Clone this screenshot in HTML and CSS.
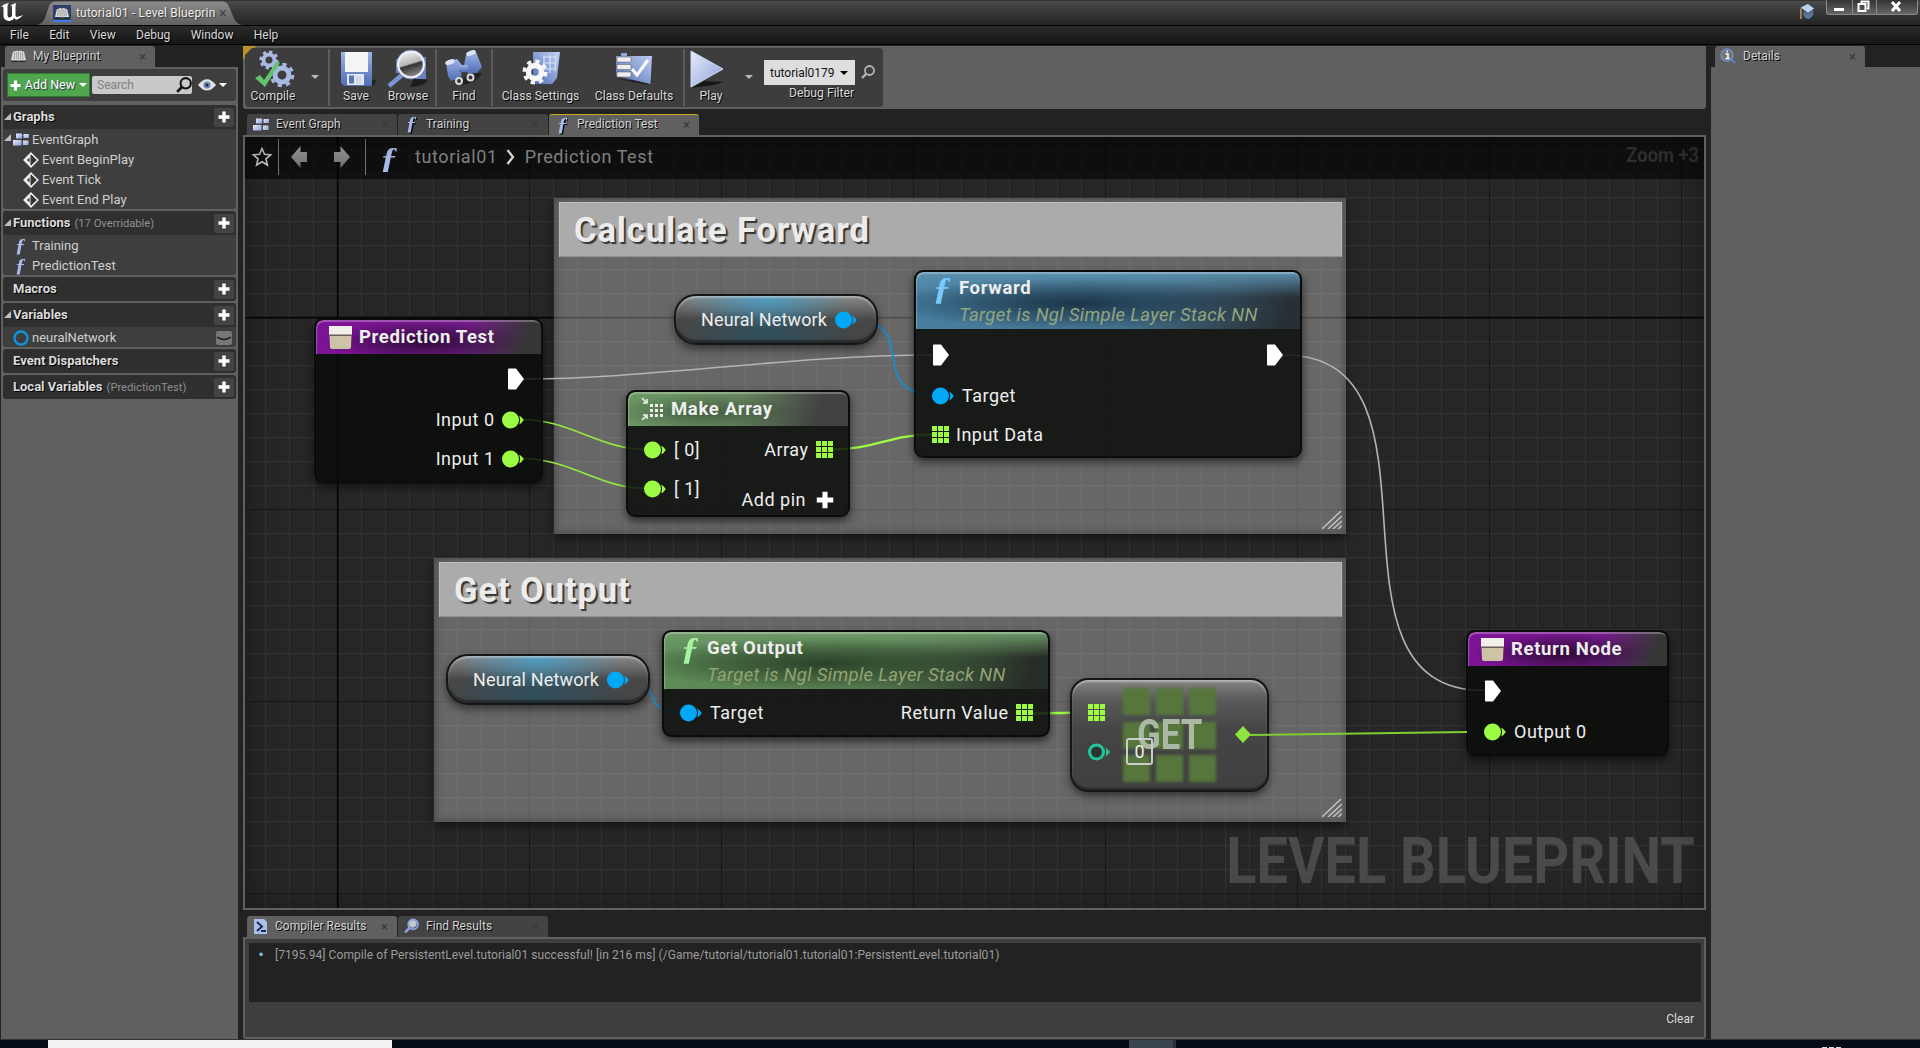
FILE: index.html
```html
<!DOCTYPE html>
<html lang="en">
<head>
<meta charset="utf-8">
<title>tutorial01 - Level Blueprint</title>
<link rel="stylesheet" href="styles.css">
</head>
<body>
<svg class="defs" width="0" height="0">
  <defs>
    <linearGradient id="steel" x1="0" y1="0" x2="1" y2="1"><stop offset="0" stop-color="#e6ecfa"/><stop offset="1" stop-color="#8ea2da"/></linearGradient>
    <linearGradient id="blue" x1="0" y1="0" x2="0" y2="1"><stop offset="0" stop-color="#9fb4e6"/><stop offset="1" stop-color="#4f6cb4"/></linearGradient>
    <linearGradient id="sheet" x1="1" y1="0" x2="0" y2="1"><stop offset="0" stop-color="#c3d3f5"/><stop offset="1" stop-color="#4f6cb4"/></linearGradient>
    <linearGradient id="ball" x1=".2" y1="0" x2=".5" y2="1"><stop offset="0" stop-color="#f6f6f6"/><stop offset=".5" stop-color="#b5b5b5"/><stop offset=".56" stop-color="#343434"/><stop offset="1" stop-color="#8c8c8c"/></linearGradient>
    <linearGradient id="arrow" x1="0" y1="0" x2="0" y2="1"><stop offset="0" stop-color="#9c9c9c"/><stop offset="1" stop-color="#6e6e6e"/></linearGradient>
    <symbol id="plus" viewBox="0 0 12 12"><path d="M4.3 0.5h3.4v3.8h3.8v3.4H7.7v3.8H4.3V7.7H.5V4.3h3.8z" fill="#fff"/></symbol>
    <symbol id="graph" viewBox="0 0 16 13"><path d="M8 2.500h3M8 10h3" stroke="#4d5d8e" stroke-width="1.200"/><rect x="3" y=".5" width="6" height="5" fill="url(#steel)"/><rect x="10.500" y="1" width="5.500" height="4" fill="url(#steel)"/><rect x="0" y="7" width="8.500" height="5.500" fill="url(#steel)"/><rect x="10" y="7.500" width="5.500" height="4.500" fill="url(#steel)"/></symbol>
    <symbol id="event" viewBox="0 0 16 16"><path d="M8 1.200 14.800 8 8 14.800 1.200 8z" fill="#333" stroke="#eee" stroke-width="1.600"/><path d="M7.500 2 1.500 8l6 6z" fill="#eee"/><path d="M6.500 5.500 4 8l2.500 2.500z" fill="#333"/></symbol>
    <symbol id="book" viewBox="0 0 16 14"><path d="M2 2 7 .5 8 2 9 .5 14 2l2 9-7 0-1 1-1-1-7 0z" fill="#d9d9d9"/><path d="M8 2v9M4 2.500 3 10M6 2.500 5.500 10M10 2.500l.5 7.500M12 2.500l1 7.500" stroke="#8a8a8a" stroke-width=".8"/><path d="M0 12.500h16" stroke="#222"/></symbol>
    <symbol id="exec" viewBox="0 0 18 22"><path d="M1 1.500Q1 .5 2 .5H9L17 11 9 21.500H2Q1 21.500 1 20.500z" fill="#fff"/></symbol>
    <symbol id="pin" viewBox="0 0 22 18"><circle cx="8.500" cy="9" r="8.500"/><path d="M17.300 4.500Q20 6 21.800 9 20 12 17.300 13.500 19 9 17.300 4.500z"/></symbol>
    <symbol id="grid" viewBox="0 0 17 17"><path d="M0 0h5v5H0zM6 0h5v5H6zM12 0h5v5h-5zM0 6h5v5H0zM6 6h5v5H6zM12 6h5v5h-5zM0 12h5v5H0zM6 12h5v5H6zM12 12h5v5h-5z" fill="#9cfc44"/></symbol>
    <symbol id="entry" viewBox="0 0 23 23"><path d="M0 0h23v9H0z" fill="#f0efe9"/><path d="M0 8.500h23v1.500H0z" fill="#6b5f55"/><path d="M.5 10h22L22 21q0 2-2 2H3q-2 0-2-2z" fill="#cdc4a5"/></symbol>
    <symbol id="grip" viewBox="0 0 20 18"><path d="M0 18 19 0M6 18 20 5M11 18 20 10M16 18 20 14.500" stroke="#c4c4c4" stroke-width="1.500" fill="none"/></symbol>
    <symbol id="lens" viewBox="0 0 14 14"><circle cx="8.500" cy="5.500" r="4.500" fill="none" stroke-width="1.800"/><path d="M5.200 8.800 1 13" stroke-width="2.400"/></symbol>
  </defs>
</svg>

<header class="titlebar">
  <svg class="ue-logo" viewBox="0 0 22 20"><path d="M0 5Q3 1.500 8 1 6.500 2 6.500 4V13q0 2 1.500 2.500 1.500 0 3-1.500V5q0-1.500-1.500-1.500Q12 1.500 15.500 1 14.500 2 14.500 4v9q0 2 1.500 2 2-.5 6-2-3 4-7 5l-1.500-2Q11 19.500 7.500 19 2.500 18 2.500 14V6Q2.500 4 0 5z" fill="#fff"/></svg>
  <div class="window-tab">
    <svg class="window-tab-shape" viewBox="0 0 210 24" preserveAspectRatio="none"><defs><linearGradient id="wt" x1="0" y1="0" x2="0" y2="1"><stop offset="0" stop-color="#8c8c8c"/><stop offset="1" stop-color="#606060"/></linearGradient></defs><path d="M0 24Q6 24 9 17L13 5Q15 .5 20 .5H186q5 0 7 5l5 12q3 6.500 9 6.500z" fill="url(#wt)"/></svg>
    <span class="asset-icon"><svg width="14" height="13"><use href="#book"/></svg></span>
    <span class="window-title">tutorial01 - Level Blueprin</span><span class="close">×</span>
  </div>
  <div class="title-tools">
    <svg class="cap" viewBox="0 0 16 18"><path d="M1 4 9 0l7 5-7 5z" fill="#b9d2f2"/><path d="M4 8l5 3 6-4v5q-3 5-6 5-4-1-5-4z" fill="#58759e"/><path d="M1.200 5V17" stroke="#d0a56a" stroke-width="1.500"/></svg>
    <div class="win-buttons">
      <span><svg width="25" height="14"><path d="M7 8h10v3H7z" fill="#fff"/></svg></span>
      <span><svg width="23" height="14"><path d="M8.500 3V1.500h7v7H14M5.500 4h7v7h-7z" stroke="#fff" stroke-width="2" fill="none"/></svg></span>
      <span><svg width="40" height="14"><path d="M15 2l8 9M23 2l-8 9" stroke="#fff" stroke-width="3"/></svg></span>
    </div>
  </div>
</header>
<nav class="menubar"><span>File</span><span>Edit</span><span>View</span><span>Debug</span><span>Window</span><span>Help</span></nav>

<main class="workspace">
  <aside class="blueprint-panel">
    <div class="tabs"><div class="tab active"><svg width="15" height="13"><use href="#book"/></svg><span>My Blueprint</span><i>×</i></div></div>
    <div class="panel">
      <div class="add-bar">
        <button class="add-new"><svg width="11" height="11"><use href="#plus"/></svg>Add New<b class="caret white"></b></button>
        <div class="search"><span>Search</span><svg width="16" height="16" stroke="#111"><use href="#lens"/></svg></div>
        <svg class="eye" viewBox="0 0 18 12"><path d="M0 6Q9-5.500 18 6 9 17 0 6z" fill="#e2e2e2"/><circle cx="9" cy="6" r="3.600" fill="#6b8ab8"/><circle cx="9" cy="6" r="1.500" fill="#223"/></svg><b class="caret white"></b>
      </div>
      <section><h2 class="open">Graphs<button><svg width="12" height="12"><use href="#plus"/></svg></button></h2>
        <p class="open"><svg width="16" height="13"><use href="#graph"/></svg>EventGraph</p>
        <p class="deep"><svg width="16" height="16"><use href="#event"/></svg>Event BeginPlay</p>
        <p class="deep"><svg width="16" height="16"><use href="#event"/></svg>Event Tick</p>
        <p class="deep"><svg width="16" height="16"><use href="#event"/></svg>Event End Play</p>
      </section>
      <section><h2 class="open">Functions<small>(17 Overridable)</small><button><svg width="12" height="12"><use href="#plus"/></svg></button></h2>
        <p><em class="fn">ƒ</em>Training</p>
        <p><em class="fn">ƒ</em>PredictionTest</p>
      </section>
      <section><h2>Macros<button><svg width="12" height="12"><use href="#plus"/></svg></button></h2></section>
      <section><h2 class="open">Variables<button><svg width="12" height="12"><use href="#plus"/></svg></button></h2>
        <p><svg width="16" height="16"><circle cx="8" cy="8" r="6.500" fill="none" stroke="#0d94dd" stroke-width="2.400"/></svg>neuralNetwork<span class="lid"><svg width="16" height="14"><path d="M1 6q7 5 14 0" stroke="#111" stroke-width="1.300" fill="none"/></svg></span></p>
      </section>
      <section><h2>Event Dispatchers<button><svg width="12" height="12"><use href="#plus"/></svg></button></h2></section>
      <section><h2>Local Variables<small>(PredictionTest)</small><button><svg width="12" height="12"><use href="#plus"/></svg></button></h2></section>
    </div>
  </aside>

  <div class="center">
    <div class="toolbar-band"><div class="toolbar">
      <div class="tool compile"><svg viewBox="0 0 44 38"><g fill="none" stroke="#a9b9e4"><circle cx="17" cy="11" r="5.500" stroke-width="4"/><circle cx="17" cy="11" r="8.300" stroke-width="2.600" stroke-dasharray="3.300 3.200"/><circle cx="30" cy="26" r="7" stroke-width="5"/><circle cx="30" cy="26" r="10.800" stroke-width="3" stroke-dasharray="4.300 4.180"/></g><path d="M3 29l5-3 4 5L25 12l3 2L13 38z" fill="#5fc46c"/></svg><span>Compile</span></div>
      <b class="caret"></b><hr>
      <div class="tool save"><svg viewBox="0 0 44 38"><path d="M14 37h26l3-7z" fill="#222"/><path d="M7 3h31v34H10l-3-3z" fill="url(#blue)"/><path d="M11 3h23v20H11z" fill="#f4f4f4"/><path d="M13 25h17v11H13z" fill="#e3e8f4"/><path d="M15 26.500h5v8h-5z" fill="#5a75b8"/><path d="M23 27v8M26 27v8" stroke="#b5bfd9"/></svg><span>Save</span></div>
      <div class="tool browse"><svg viewBox="0 0 44 38"><path d="M24 38q14 0 18-7l-14-2z" fill="#1d1d1d"/><path d="M30 8h10v22H30zM10 10h8v14h-8z" fill="#6883c4"/><path d="M3 37 16 26" stroke="#7c95d4" stroke-width="4.500"/><circle cx="25" cy="15.500" r="13" fill="url(#ball)" stroke="#eceef6" stroke-width="2.600"/><circle cx="25" cy="15.500" r="14.600" fill="none" stroke="#6c82bd" stroke-width=".8"/></svg><span>Browse</span></div>
      <hr>
      <div class="tool find"><svg viewBox="0 0 44 38"><path d="M16 36q18 0 24-12l-14 0z" fill="#222"/><g fill="url(#blue)"><path d="M4 13 15 10l5 6-1 12-10 4-3-5z"/><path d="M24 6 34 3l6 15-5 6-9 1-4-9z"/><path d="M17 16h9v7h-9z"/></g><ellipse cx="8" cy="13" rx="5" ry="2.500" fill="#dce4f7" transform="rotate(-20 8 13)"/><ellipse cx="29" cy="4" rx="5" ry="2.500" fill="#dce4f7" transform="rotate(-20 29 4)"/><circle cx="17" cy="32" r="4" fill="#d8d8d8"/><circle cx="17" cy="32" r="1.900" fill="#333"/><circle cx="28.500" cy="28.500" r="4" fill="#d8d8d8"/><circle cx="28.500" cy="28.500" r="1.900" fill="#333"/></svg><span>Find</span></div>
      <hr>
      <div class="tool settings"><svg viewBox="0 0 44 38"><path d="M14 3h27l-3 26-5 6H14z" fill="url(#sheet)"/><path d="M24 8h13M24 14h13M26 20h10M25 6v16M31 6v18M37 6l-1 16" stroke="#dbe5fb" stroke-width="1.100"/><g fill="none" stroke="#f7f7f7"><circle cx="16" cy="23" r="6.500" stroke-width="5.500"/><circle cx="16" cy="23" r="10.700" stroke-width="3.600" stroke-dasharray="4.300 4.100"/></g></svg><span>Class Settings</span></div>
      <div class="tool defaults"><svg viewBox="0 0 44 38"><path d="M5 30l31 6 4-4z" fill="#222"/><path d="M4 7h5V4h6v3h25l-1.500 28L4 27z" fill="url(#sheet)"/><path d="M5 8h14v5H5zM5 15.500h14v5H5zM5 23h14v5H5z" fill="#eee" stroke="#555" stroke-width=".5"/><path d="M20 20l5 6L36 11" stroke="#fbfbfb" stroke-width="3" fill="none"/></svg><span>Class Defaults</span></div>
      <hr class="last">
      <div class="tool play"><svg viewBox="0 0 44 38"><path d="M3 39l12-7 20 1-10 3z" fill="#161616"/><path d="M2 2v36l32-18z" fill="url(#steel)" stroke="#cdd9f5"/></svg><span>Play</span></div>
      <b class="caret second"></b>
      <div class="debug"><div class="debug-row"><div class="select">tutorial0179<b class="caret dark"></b></div><svg width="14" height="14" stroke="#b5b5b5"><use href="#lens"/></svg></div><span>Debug Filter</span></div>
    </div></div>

    <div class="tabs graph-tabs">
      <div class="tab"><svg width="16" height="13"><use href="#graph"/></svg><span>Event Graph</span><i>×</i></div>
      <div class="tab"><em class="fn">ƒ</em><span>Training</span><i>×</i></div>
      <div class="tab active current"><em class="fn">ƒ</em><span>Prediction Test</span><i>×</i></div>
    </div>

    <div class="graph">
      <div class="breadcrumb">
        <svg class="star" viewBox="0 0 20 20"><path d="M10 1.500l2.500 5.700 6.200.6-4.700 4.100 1.400 6.100-5.400-3.200L4.600 18 6 11.900 1.300 7.800l6.200-.6z" fill="none" stroke="#c6c6c6" stroke-width="1.600"/></svg>
        <u></u>
        <svg class="nav" viewBox="0 0 17 22"><path d="M0 11 9.500 0v6H16v10H9.500v6z" fill="url(#arrow)"/></svg>
        <svg class="nav next" viewBox="0 0 17 22"><path d="M17 11 7.500 0v6H1v10h6.500v6z" fill="url(#arrow)"/></svg>
        <u class="second"></u><em class="fn big">ƒ</em>
        <span class="crumb-a">tutorial01</span>
        <svg class="chev" viewBox="0 0 9 16"><path d="M1.500 1 7 8l-5.500 7" stroke="#e0e0e0" stroke-width="2.200" fill="none"/></svg>
        <span class="crumb-b">Prediction Test</span>
      </div>
      <div class="zoom">Zoom +3</div>
      <div class="watermark">LEVEL BLUEPRINT</div>

      <div class="comment calc"><h3>Calculate Forward</h3><svg class="grip" width="20" height="18"><use href="#grip"/></svg></div>
      <div class="comment output"><h3>Get Output</h3><svg class="grip" width="20" height="18"><use href="#grip"/></svg></div>

      <svg class="wires" viewBox="245 137 1459 771" fill="none">
        <g stroke="#b4b4b4" stroke-width="1.600"><path d="M524 379C650 379 790 355 932 355"/><path d="M1284 355C1462 355 1306 690.500 1484 690.500"/></g>
        <g stroke="#94ea42" stroke-width="1.700"><path d="M522 419.500C570 419.500 600 449.500 646 449.500"/><path d="M522 458.500C570 458.500 600 488.500 646 488.500"/></g>
        <g stroke="#9cfc44" stroke-width="2.400"><path d="M832 449.500C875 449.500 890 434.500 932 434.500"/><path d="M1032 713.500 1090 712.500"/></g>
        <g stroke="#1290d4" stroke-width="1.700"><path d="M850 319C923 319 863 395 936 395"/><path d="M622 679C667 679 637 713 682 713"/></g>
      </svg>

      <div class="node n-entry"><div class="head purple"><svg width="23" height="23"><use href="#entry"/></svg><b>Prediction Test</b></div>
        <div class="pins right"><div class="pin exec"><svg width="18" height="22"><use href="#exec"/></svg></div><div class="pin"><span>Input 0</span><svg width="22" height="18" fill="#9cfc44"><use href="#pin"/></svg></div><div class="pin"><span>Input 1</span><svg width="22" height="18" fill="#9cfc44"><use href="#pin"/></svg></div></div></div>

      <div class="pill p-one"><span>Neural Network</span><svg width="22" height="18" fill="#00a8f6"><use href="#pin"/></svg></div>
      <div class="pill p-two"><span>Neural Network</span><svg width="22" height="18" fill="#00a8f6"><use href="#pin"/></svg></div>

      <div class="node n-make"><div class="head sage"><svg width="23" height="24" viewBox="0 0 23 24"><path d="M1 1l4 4M6 2v4H2M1 23l4-4M6 22v-4H2" stroke="#eee" stroke-width="1.600" fill="none"/><path d="M9 7h3v3H9zM14 7h3v3h-3zM19 7h3v3h-3zM9 12h3v3H9zM14 12h3v3h-3zM19 12h3v3h-3zM9 17h3v3H9zM14 17h3v3h-3zM19 17h3v3h-3z" fill="#eee"/></svg><b>Make Array</b></div>
        <div class="columns"><div class="pins left"><div class="pin"><svg width="22" height="18" fill="#9cfc44"><use href="#pin"/></svg><span>[ 0]</span></div><div class="pin"><svg width="22" height="18" fill="#9cfc44"><use href="#pin"/></svg><span>[ 1]</span></div></div>
        <div class="pins right"><div class="pin"><span>Array</span><svg width="17" height="17"><use href="#grid"/></svg></div><div class="pin add"><span>Add pin</span><svg width="18" height="18"><use href="#plus"/></svg></div></div></div></div>

      <div class="node n-forward"><div class="head tall blue"><em class="fn">ƒ</em><div><b>Forward</b><i>Target is Ngl Simple Layer Stack NN</i></div></div>
        <div class="columns"><div class="pins left"><div class="pin exec"><svg width="18" height="22"><use href="#exec"/></svg></div><div class="pin"><svg width="22" height="18" fill="#00a8f6"><use href="#pin"/></svg><span>Target</span></div><div class="pin array"><svg width="17" height="17"><use href="#grid"/></svg><span>Input Data</span></div></div>
        <div class="pins right"><div class="pin exec"><svg width="18" height="22"><use href="#exec"/></svg></div></div></div></div>

      <div class="node n-output"><div class="head tall green"><em class="fn">ƒ</em><div><b>Get Output</b><i>Target is Ngl Simple Layer Stack NN</i></div></div>
        <div class="columns"><div class="pins left"><div class="pin"><svg width="22" height="18" fill="#00a8f6"><use href="#pin"/></svg><span>Target</span></div></div><div class="pins right"><div class="pin"><span>Return Value</span><svg width="17" height="17"><use href="#grid"/></svg></div></div></div></div>

      <div class="get-node">
        <div class="get-tiles"><s></s><s></s><s></s><s></s><s></s><s></s><s></s><s></s><s></s></div>
        <div class="get-label">GET</div>
        <div class="get-inputs"><svg width="17" height="17"><use href="#grid"/></svg><div><svg width="23" height="18" viewBox="0 0 23 18"><circle cx="8.500" cy="9" r="7" stroke="#22c49a" stroke-width="3" fill="#2b3431"/><path d="M17.500 4.500Q20 6 22 9q-2 3-4.500 4.500Q19 9 17.500 4.500z" fill="#22c49a"/></svg><span class="index">0</span></div></div>
        <svg class="diamond" width="16" height="17"><path d="M8 0l8 8.500-8 8.500-8-8.500z" fill="#8fe33f"/></svg>
      </div>

      <div class="node n-return"><div class="head purple"><svg width="23" height="23"><use href="#entry"/></svg><b>Return Node</b></div>
        <div class="pins left"><div class="pin exec"><svg width="18" height="22"><use href="#exec"/></svg></div><div class="pin"><svg width="22" height="18" fill="#9cfc44"><use href="#pin"/></svg><span>Output 0</span></div></div></div>

      <svg class="wires" viewBox="245 137 1459 771" fill="none"><path d="M1250 735 1467 732" stroke="#7fd02f" stroke-width="2"/></svg>
      <div class="vignette"></div>
    </div>

    <div class="tabs result-tabs">
      <div class="tab active"><svg width="15" height="15"><path d="M1 0h10l3 3v12H1z" fill="#a9c2ee"/><path d="M4 3l5 4.500L4 12M8 12h5" stroke="#1d2b50" stroke-width="2" fill="none"/></svg><span>Compiler Results</span><i>×</i></div>
      <div class="tab"><svg width="15" height="16" stroke="#8ba2dc"><circle cx="8.500" cy="5.500" r="4" fill="#c8c8c8"/><use href="#lens"/></svg><span>Find Results</span><i>×</i></div>
    </div>
    <div class="results"><div class="log"><b>•</b><span>[7195.94] Compile of PersistentLevel.tutorial01 successful! [in 216 ms] (/Game/tutorial/tutorial01.tutorial01:PersistentLevel.tutorial01)</span></div><div class="clear">Clear</div></div>
  </div>

  <aside class="details-panel">
    <div class="tabs"><div class="tab active"><svg width="16" height="16"><circle cx="7" cy="7" r="6" fill="#777" stroke="#6f8ccc" stroke-width="1.400"/><path d="M11.500 11.500 15 15" stroke="#5b7fd6" stroke-width="2"/><path d="M5.500 6H8v4.500M5.500 10.500h4M6.500 3.500H8" stroke="#fff" stroke-width="1.500" fill="none"/></svg><span>Details</span><i>×</i></div></div>
    <div class="panel"></div>
  </aside>
</main>
<footer class="taskbar"><span class="start"></span><span class="active-app"></span><span class="clock"><s></s><s></s><s></s></span></footer>
</body>
</html>
```
FILE: styles.css
```css
* { box-sizing: border-box; }
body { margin: 0; width: 1920px; height: 1048px; overflow: hidden; display: flex; flex-direction: column; background: #222; color: #d8d8d8; font: 12px/20px Roboto, "Noto Sans", sans-serif; }
svg { display: block; flex: none; overflow: visible; }
em, i, s, u { font-style: normal; text-decoration: none; }
button { font: inherit; color: inherit; padding: 0; border: 0; }
.defs { position: absolute; }

.titlebar { height: 26px; flex: none; display: flex; background: linear-gradient(#4a4a4a 0, #3c3c3c 8px, #2c2c2c 18px, #232323 25px); border-top: 1px solid #333; border-bottom: 1px solid #000; }
.ue-logo { width: 22px; height: 20px; margin: 1px 0 0 1px; }
.window-tab { position: relative; display: flex; align-items: center; width: 210px; height: 24px; margin-left: 13px; padding-left: 17px; }
.window-tab > * { position: relative; }
.window-tab .window-tab-shape { position: absolute; left: 0; top: 0; width: 210px; height: 24px; }
.asset-icon { width: 18px; height: 17px; padding: 2px; background: #2d3f66; border-bottom: 2px solid #3a7bf0; }
.window-title { margin-left: 5px; width: 141px; overflow: hidden; white-space: nowrap; color: #eee; letter-spacing: .17px; text-shadow: 1px 1px 1px #333; }
.close { margin-left: 2px; color: #444; font-size: 14px; }
.title-tools { margin-left: auto; display: flex; gap: 11px; padding-right: 2px; }
.cap { width: 16px; height: 16px; margin-top: 3px; }
.win-buttons { display: flex; height: 15px; margin-top: -1px; border: 1px solid #888; border-top: 0; border-radius: 0 0 3px 3px; background: linear-gradient(#333, #666); }
.win-buttons span + span { border-left: 1px solid #888; }

.menubar { height: 19px; flex: none; display: flex; gap: 20.300px; padding-left: 10px; line-height: 18px; background: linear-gradient(#2a2a2a, #161616); border-bottom: 1px solid #000; text-shadow: 1px 1px #000; }
.menubar span { white-space: nowrap; }

.workspace { height: 994px; flex: none; padding: 1px 0 0 1px; display: grid; grid-template-columns: 237px 1463px 209px; gap: 5px; }
.blueprint-panel, .details-panel, .center { display: flex; flex-direction: column; min-height: 0; }
.tabs { display: flex; gap: 1px; height: 21px; flex: none; padding-left: 4px; }
.tab { width: 150px; display: flex; align-items: center; padding: 0 9px 1px 6px; background: #434343; border-radius: 3px 3px 0 0; color: #d2d2d2; line-height: 19px; text-shadow: 1px 1px #000; }
.tab.active { background: #606060; }
.tab.current { border-top: 1px solid #c8a81c; }
.tab span { margin-left: 7px; white-space: nowrap; letter-spacing: .05px; }
.tab i { margin-left: auto; color: #383838; font-size: 13px; text-shadow: none; }
.fn { display: inline-block; width: 15px; text-align: center; font: italic bold 18px/18px "Liberation Serif", serif; color: #a9bdec; transform: scaleX(1.2); }
.panel { flex: 1; background: #606060; padding: 2px; }
.details-panel .tab { padding-left: 5px; }

.add-bar { height: 32px; display: flex; align-items: center; background: #3e3e3e; border-radius: 3px; padding-left: 4px; margin-bottom: 4px; }
.add-new { width: 83px; height: 24px; display: flex; align-items: center; justify-content: center; gap: 4px; background: #4fa64f; border: 1px solid #2f7a33; color: #fff; text-shadow: 1px 1px 1px #234; font-size: 12.500px; }
.caret { width: 0; height: 0; border: 4px solid transparent; border-top: 4px solid #bbb; border-bottom: 0; }
.caret.white { border-top-color: #fff; }
.caret.dark { border-top-color: #000; }
.search { width: 100px; height: 18px; margin: 0 6px 0 2px; padding: 0 0 0 5px; display: flex; align-items: center; justify-content: space-between; background: #c9c9c9; color: #818181; border-radius: 2px; }
.eye { width: 18px; height: 12px; margin-right: 3px; }
section { margin-bottom: 2px; background: #3e3e3e; border-radius: 3px; overflow: hidden; }
h2 { margin: 0; height: 24px; display: flex; align-items: center; padding: 0 2.500px 0 10px; background: #2f2f2f; color: #dcdcdc; font-size: 13px; font-weight: 700; line-height: 24px; text-shadow: 1px 1px #000; }
h2 small { margin-left: 4px; padding-top: 2px; color: #8f8f8f; font-size: 11.200px; font-weight: 400; text-shadow: none; }
h2 button { margin-left: auto; width: 20px; height: 19px; display: grid; place-items: center; background: #444; border-radius: 2px; }
.open { position: relative; }
.open::before { content: ""; position: absolute; left: 1px; top: 8px; border: solid transparent; border-width: 0 0 7px 7px; border-bottom-color: #c0c0c0; }
p { margin: 0; height: 20px; display: flex; align-items: center; padding: 1px 0 0 10px; gap: 3px; color: #cfcfcf; font-size: 13px; }
p .fn { margin-right: 1px; }
p.open::before { top: 5px; }
p.deep { padding-left: 20px; }
.lid { margin: 0 4px 0 auto; width: 16px; height: 14px; background: #777; border-radius: 2px; }

.toolbar-band { height: 63px; flex: none; padding: 2px; background: linear-gradient(135deg, #b8922c 9px, #606060 10px); border-radius: 0 0 3px 3px; }
.toolbar { width: 638px; height: 59px; display: flex; background: #3d3d3d; border-radius: 4px; clip-path: polygon(7px 0, 100% 0, 100% 100%, 0 100%, 0 7px); }
.toolbar hr { width: 2px; height: 57px; margin: 1px 0; border: 0; background: #5c5c5c; }
.toolbar hr.last { margin-left: 3px; }
.tool { display: flex; flex-direction: column; align-items: center; text-shadow: 1px 1px #000; font-size: 12.200px; white-space: nowrap; line-height: 20px; }
.tool svg { width: 44px; height: 38px; margin-top: 1px; }
.tool span { margin-top: -1px; }
.compile { width: 56px; }
.compile svg { margin-left: 2px; }
.toolbar > .caret { margin: 27px 9px 0 10px; }
.toolbar > .caret.second { margin: 27px 11px 0 8px; }
.save { width: 52px; }
.browse { width: 52px; margin-right: 1px; }
.find { width: 54px; }
.settings { width: 95px; }
.defaults { width: 92px; }
.play { width: 52px; }
.debug { display: flex; flex-direction: column; padding-top: 12px; text-shadow: 1px 1px #000; }
.debug > span { margin: -2px 0 0 25px; font-size: 12.200px; line-height: 20px; }
.debug-row { display: flex; align-items: center; gap: 6px; }
.debug-row svg { margin-bottom: 2px; }
.select { width: 91px; height: 25px; display: flex; align-items: center; justify-content: space-between; padding: 0 7px 0 6px; background: #dedede; color: #111; text-shadow: none; font-size: 12px; }

.graph-tabs { margin-top: 5px; }
.graph { position: relative; height: 775px; flex: none; border: 2px solid #606060; overflow: hidden; background-color: #262626;
  background-image: linear-gradient(90deg, #000 1px, transparent 1px), linear-gradient(#000 1px, transparent 1px), linear-gradient(90deg, #171717 1px, transparent 1px), linear-gradient(#171717 1px, transparent 1px), linear-gradient(90deg, #343434 1px, transparent 1px), linear-gradient(#343434 1px, transparent 1px);
  background-size: 3000px 3000px, 3000px 3000px, 192px 192px, 192px 192px, 24px 24px, 24px 24px;
  background-position: 92px 0, 0 180px, 92px 0, 0 180px, 20px 0, 0 12px; }
.breadcrumb { height: 42px; display: flex; align-items: center; padding: 0 0 2px 7px; background: rgba(0,0,0,.6); color: #858585; font-size: 18px; letter-spacing: .6px; white-space: nowrap; }
.star { width: 20px; height: 20px; }
.breadcrumb u { width: 1px; height: 36px; margin-left: 6px; background: #777; }
.breadcrumb u.second { margin-left: 15px; }
.nav { width: 17px; height: 22px; margin-left: 12px; }
.nav.next { margin-left: 25px; }
.fn.big { width: 20px; margin-left: 13px; font-size: 30px; line-height: 34px; letter-spacing: 0; }
.crumb-a { margin-left: 16px; }
.chev { width: 9px; height: 16px; margin: 0 10px 0 8px; }
.zoom { position: absolute; right: 5px; top: 6px; font-size: 20px; font-weight: 700; line-height: 24px; color: #303030; transform: scaleX(.92); transform-origin: right; }
.watermark { position: absolute; right: 9px; top: 684px; color: #4a4a4a; font-size: 65px; line-height: 80px; font-weight: 700; white-space: nowrap; transform: scaleX(.86); transform-origin: right; }
.wires { position: absolute; left: 0; top: 0; width: 1459px; height: 771px; }
.vignette { position: absolute; inset: 0; box-shadow: inset 0 0 30px rgba(0,0,0,.35); }

.comment { position: absolute; padding: 4px; background: rgba(255,255,255,.3); box-shadow: 0 4px 8px rgba(0,0,0,.5), inset 0 0 6px 2px rgba(30,30,30,.35); }
.comment.calc { left: 309px; top: 61px; width: 792px; height: 336px; }
.comment.output { left: 189px; top: 421px; width: 912px; height: 264px; }
.comment h3 { margin: 0 -1px 0 1px; width: calc(100% - 1px); height: 55px; padding-left: 14px; background: #ababab; border: 1px solid #bdbdbd; border-bottom-color: #929292; color: #ececec; font-size: 34.500px; letter-spacing: .9px; line-height: 54px; text-shadow: 2px 2px 1px #333; }
.grip { position: absolute; right: 4px; bottom: 5px; }

.node { position: absolute; border: 2px solid #0b0b0b; border-radius: 9px; background: rgba(10,12,9,.84); box-shadow: 0 4px 9px rgba(0,0,0,.6); color: #eee; font-size: 18px; letter-spacing: .5px; overflow: hidden; white-space: nowrap; }
.n-entry { left: 69px; top: 181px; width: 229px; height: 165px; }
.n-make { left: 381px; top: 253px; width: 224px; height: 127px; }
.n-forward { left: 669px; top: 133px; width: 388px; height: 188px; }
.n-output { left: 417px; top: 493px; width: 388px; height: 107px; }
.n-return { left: 1221px; top: 493px; width: 203px; height: 126px; }
.head { height: 34px; display: flex; align-items: center; padding-left: 13px; gap: 7px; box-shadow: inset 1px 2px 1px rgba(255,255,255,.28); border-radius: 7px 7px 0 0; }
.head b { line-height: 32px; font-weight: 700; font-size: 18.500px; letter-spacing: .65px; }
.purple { background: radial-gradient(ellipse 45% 60% at 48% 62%, rgba(32,8,40,.85), rgba(32,8,40,.4) 55%, transparent), linear-gradient(108deg, #7d1395 20%, #741d8a 65%, #363636 92%); }
.sage { background: radial-gradient(ellipse 45% 55% at 35% 60%, rgba(40,60,40,.6), rgba(40,60,40,.25) 55%, transparent), linear-gradient(108deg, #6b9663 15%, #66875f 50%, #414341 85%); }
.head.tall { height: 57px; align-items: flex-start; padding: 4px 0 0 15px; gap: 6px; }
.tall div { display: flex; flex-direction: column; }
.tall b { line-height: 25px; }
.tall i { font-style: italic; line-height: 28px; color: #93a57d; font-size: 18.500px; letter-spacing: .32px; }
.tall .fn { width: 22px; font-size: 31px; line-height: 26px; letter-spacing: 0; color: #78c8fb; }
.blue { background: radial-gradient(ellipse 50% 45% at 42% 55%, rgba(25,50,68,.95), rgba(25,50,68,.45) 55%, transparent), linear-gradient(#5a8fae, transparent 45%), linear-gradient(108deg, #477e9f 5%, #45728e 55%, #283036 95%); }
.green { background: radial-gradient(ellipse 50% 45% at 42% 55%, rgba(38,60,36,.9), rgba(38,60,36,.45) 55%, transparent), linear-gradient(#6d9a68, transparent 45%), linear-gradient(108deg, #5e8c57 5%, #567a50 55%, #262c26 95%); }
.green .fn { color: #a6f2a0; }
.green i { color: #93a374; }
.columns { display: flex; justify-content: space-between; }
.pins { padding-top: 4px; }
.n-entry .pins, .n-return .pins { padding-top: 3px; }
.pin { height: 39px; display: flex; align-items: center; }
.pin.exec { height: 43px; }
.left .pin { padding-left: 16px; gap: 8px; }
.left .pin.array { gap: 7px; }
.right .pin { justify-content: flex-end; padding-right: 17px; gap: 7.500px; }
.right .pin.exec { padding-right: 16px; }
.n-make .right .pin, .n-output .right .pin { padding-right: 15px; }
.right .pin.add { margin-top: 11px; gap: 10px; padding-right: 14px; }

.pill { position: absolute; width: 204px; height: 51px; display: flex; align-items: center; padding-left: 25px; gap: 8px; border: 2px solid #151515; border-radius: 22px; color: #eee; font-size: 18px; letter-spacing: .15px; white-space: nowrap; background: radial-gradient(ellipse 42% 60% at 45% 10%, rgba(60,165,215,.7), transparent), radial-gradient(ellipse 45% 60% at 45% 80%, rgba(30,85,110,.6), transparent), linear-gradient(#888 0, #636363 30%, #484848 50%, #444); box-shadow: 0 4px 8px rgba(0,0,0,.5), inset 0 2px 2px rgba(255,255,255,.35), inset 0 -3px 2px rgba(0,0,0,.4); }
.p-one { left: 429px; top: 157px; }
.p-two { left: 201px; top: 517px; }

.get-node { position: absolute; left: 825px; top: 541px; width: 199px; height: 114px; border: 2px solid #151515; border-radius: 18px; background: linear-gradient(#858585 0, #5a5a5a 18%, #454545 45%, #404040); box-shadow: 0 4px 8px rgba(0,0,0,.5), inset 0 2px 2px rgba(255,255,255,.4), inset 0 -2px 2px rgba(0,0,0,.4); }
.get-tiles { position: absolute; left: 51px; top: 8px; display: grid; grid-template: repeat(3, 27px) / repeat(3, 26.500px); gap: 6.500px; filter: blur(1.500px); }
.get-tiles s { background: #56763c; }
.get-label { position: absolute; left: 65px; top: 30px; color: #aab8a4; font-size: 42px; font-weight: 700; line-height: 50px; transform: scaleX(.83); transform-origin: left; }
.get-inputs { position: absolute; left: 16px; top: 24px; display: flex; flex-direction: column; gap: 17px; }
.get-inputs div { display: flex; align-items: center; gap: 15px; }
.index { width: 27px; height: 27px; border: 2px solid #ccc; border-radius: 3px; text-align: center; font-size: 18px; line-height: 23px; color: #eee; }
.diamond { position: absolute; left: 163px; top: 46px; }

.result-tabs { margin-top: 6px; }
.results { height: 102px; flex: none; display: flex; flex-direction: column; background: #3e3e3e; border: 2px solid #606060; padding: 4px; border-radius: 0 0 3px 3px; }
.log { height: 59px; margin-right: -1px; display: flex; background: #222; padding: 1px 0 0 8px; gap: 10px; color: #9c9c9c; line-height: 22px; white-space: nowrap; font-size: 12px; letter-spacing: .065px; }
.log b { color: #7cc7f2; width: 8px; text-align: center; font-size: 14px; }
.clear { align-self: flex-end; margin: 6px 6px 0 0; line-height: 22px; color: #dcdcdc; }

.taskbar { height: 9px; flex: none; border-top: 1px solid #333; display: flex; background: #050c15; }
.start { width: 344px; margin-left: 48px; background: #f2f2f2; }
.active-app { width: 47px; margin-left: 737px; background: #3a444d; border-right: 3px solid #29323a; }
.clock { display: flex; gap: 2px; align-items: flex-end; margin-left: 646px; }
.clock s { width: 5px; height: 1px; background: #ddd; }
```
